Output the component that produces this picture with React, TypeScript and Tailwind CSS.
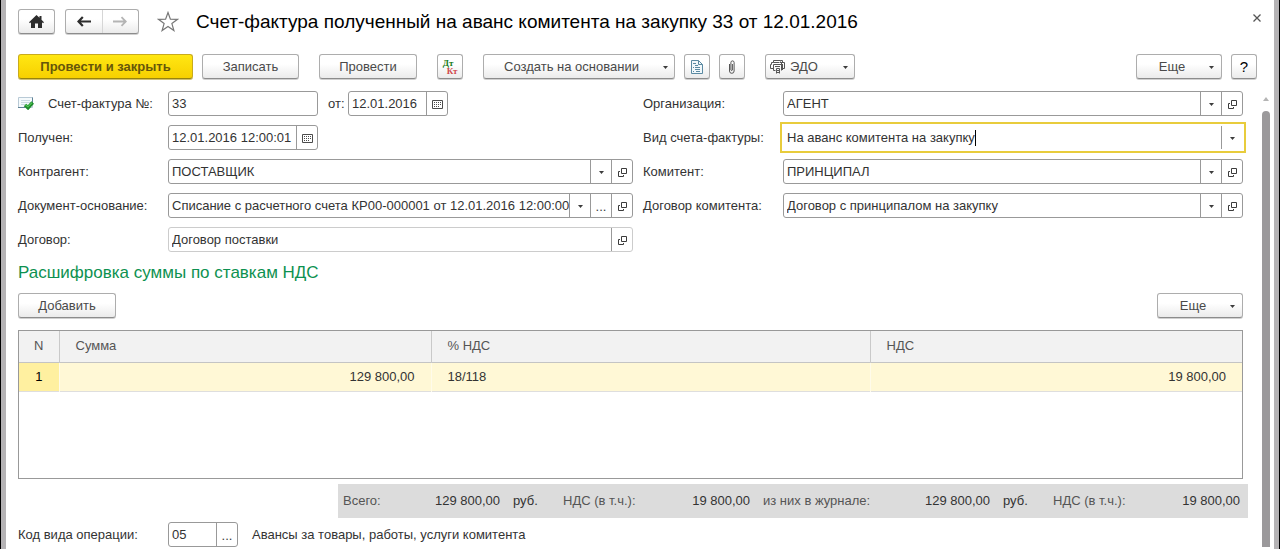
import type { ReactNode } from "react";
import { clsx } from "clsx";

const buttonStyle =
  "flex h-[25px] shrink-0 items-center justify-center rounded-[3px] border border-[#adadad] border-b-[#8c8c8c] bg-linear-to-b from-white from-40% to-[#ebebeb] text-[#4a4a4a] shadow-[0_1px_0_#d0d0d0]";

const cellStyle =
  "flex w-[21px] shrink-0 items-center justify-center border-l border-[#999999] pt-[2px] text-[#3c3c3c]";

function Caret() {
  return (
    <svg className="h-[3px] w-[5px]" viewBox="0 0 5 3" aria-hidden="true">
      <path d="M0 0h5L2.5 3z" fill="#3c3c3c" />
    </svg>
  );
}

function CalendarIcon() {
  return (
    <svg className="h-[9px] w-[11px]" viewBox="0 0 11 9" aria-hidden="true">
      <path d="M.5.5h10v8H.5z" fill="none" stroke="#4c4c4c" />
      <path d="M2 2.500h7M2 4.500h7M2 6.500h5" stroke="#4c4c4c" strokeDasharray="1 1" />
    </svg>
  );
}

function OpenIcon() {
  return (
    <svg className="h-[9px] w-[9px]" viewBox="0 0 9 9" aria-hidden="true">
      <path d="M3.500.5h5v5h-5zM2 3.500H.5v5h5V7" fill="none" stroke="#3c3c3c" />
    </svg>
  );
}

function HomeIcon() {
  return (
    <svg className="h-[13px] w-[15px]" viewBox="0 0 15 13" aria-hidden="true">
      <path d="M7.500 0 10.500 2.800V1h2v3.700L15 7.200l-1 1-1-.9V13H9V8.500H6V13H2V7.300l-1 .9-1-1z" fill="#2d2d2d" />
    </svg>
  );
}

function ArrowIcon({ forward = false }: { forward?: boolean }) {
  return (
    <svg className="h-[11px] w-[14px]" viewBox="0 0 14 11" aria-hidden="true">
      {forward ? (
        <path d="M0 5.500h13M8.500 1.200l4.300 4.300-4.300 4.300" fill="none" stroke="#b4b4b4" strokeWidth="1.800" />
      ) : (
        <path d="M14 5.500H1.500M5.800 1 1.500 5.500 5.800 10" fill="none" stroke="#2d2d2d" strokeWidth="2.200" />
      )}
    </svg>
  );
}

function StarIcon() {
  return (
    <svg className="h-[21px] w-[22px]" viewBox="0 0 22 21" aria-hidden="true">
      <path
        d="M11 1.500l2.400 6.600 7.100.2-5.600 4.300 2 6.900L11 15.500l-5.900 4 2-6.900L1.500 8.300l7.100-.2z"
        fill="#fff"
        stroke="#777"
        strokeWidth="1.200"
      />
    </svg>
  );
}

function PostedIcon() {
  return (
    <svg className="h-[13px] w-[16px]" viewBox="0 0 16 13" aria-hidden="true">
      <path d="M.5.5h14v10H.5z" fill="#f5fafc" stroke="#b9cad6" />
      <path d="M0 10.500h7M14.500.5v6" stroke="#5f8296" />
      <path d="M3 3.500h9M3 5.500h9M3 7.500h4" stroke="#cbdae2" />
      <path d="M7 8l3 2.700L14.700 5.500" fill="none" stroke="#1e8a2a" strokeWidth="3.600" />
      <path d="M7.500 7.800l2.500 2 4-4.100" fill="none" stroke="#52c957" strokeWidth="1.200" />
    </svg>
  );
}

function DocumentIcon() {
  return (
    <svg className="h-[14px] w-[12px]" viewBox="0 0 12 14" aria-hidden="true">
      <path d="M.5.5h7l4 4v9H.5z" fill="#f1f8fb" stroke="#5b8aa2" />
      <path d="M7.500.5v4h4" fill="none" stroke="#5b8aa2" />
      <path d="M2 3.500h3M4 5.500h3M2 7.500h1M4 7.500h5M4 9.500h5M2 11.500h1M5 11.500h4" stroke="#5b8aa2" />
    </svg>
  );
}

function ClipIcon() {
  return (
    <svg className="h-[14px] w-[8px]" viewBox="0 0 8 14" aria-hidden="true">
      <path
        d="M1.500 4v7a2.300 2.300 0 0 0 4.600 0V2.500a1.600 1.600 0 0 0-3.200 0V10a.8.8 0 0 0 1.500 0V4"
        fill="none"
        stroke="#555"
      />
    </svg>
  );
}

function ExchangeIcon() {
  return (
    <svg className="h-[15px] w-[15px]" viewBox="0 0 15 15" aria-hidden="true">
      <path d="M3.500 3.500v-2h7v1M10.500 1.500h2v2M10 3.500h4.500v6h-2" fill="none" stroke="#555" />
      <path d="M3.500 3.500H1.500v2h-1v4h3M3.500 3.500h6M3.500 5.500v6h2M3.500 5.500h8M11.500 4v7.500M12.500 5v6" fill="none" stroke="#555" />
      <path d="M5 7.500h5" stroke="#555" />
      <path d="M6.500 9.500h3v2h-3zM6.500 11.500v3M9.500 11.500v3M7 13.500h2" fill="none" stroke="#555" />
    </svg>
  );
}

type FieldProps = {
  id: string;
  value: string;
  kind?: "text" | "select";
  className?: string;
  cells?: ("calendar" | "open" | "more")[];
  muted?: boolean;
};

const cellNames = { calendar: "Выбрать дату", open: "Открыть", more: "Выбрать" };

function Field({ id, value, kind = "text", className, cells = [], muted }: FieldProps) {
  return (
    <div
      className={clsx(
        "flex h-[25px] overflow-hidden rounded-[3px] border bg-white",
        muted ? "border-[#cccccc]" : "border-[#999999]",
        className,
      )}
    >
      {kind === "select" ? (
        <div className="grid min-w-0 flex-1 grid-cols-[1fr_21px]">
          <select
            id={id}
            className="col-span-2 col-start-1 row-start-1 min-w-0 appearance-none pr-[21px] pl-[3px] outline-none"
          >
            <option>{value}</option>
          </select>
          <span className={clsx(cellStyle, "pointer-events-none col-start-2 row-start-1")}>
            <Caret />
          </span>
        </div>
      ) : (
        <input id={id} defaultValue={value} className="min-w-0 flex-1 pl-[3px] outline-none" />
      )}
      {cells.map((cell) => (
        <button key={cell} type="button" aria-label={cellNames[cell]} className={cellStyle}>
          {cell === "calendar" && <CalendarIcon />}
          {cell === "open" && <OpenIcon />}
          {cell === "more" && "..."}
        </button>
      ))}
    </div>
  );
}

function Row({ id, label, icon, children }: { id: string; label: string; icon?: ReactNode; children: ReactNode }) {
  return (
    <div className="flex h-[25px] items-center">
      <label htmlFor={id} className="flex w-[150px] shrink-0 items-center gap-[14px] whitespace-nowrap">
        {icon}
        {label}
      </label>
      {children}
    </div>
  );
}

function RightRow({ id, label, children }: { id: string; label: string; children: ReactNode }) {
  return (
    <div className="flex h-[25px] items-center">
      <label htmlFor={id} className="w-[140px] shrink-0 whitespace-nowrap">
        {label}
      </label>
      {children}
    </div>
  );
}

function MoreButton() {
  return (
    <button type="button" className={clsx(buttonStyle, "w-[86px] gap-6 pl-[15px]")}>
      Еще
      <span className="pt-[2px]">
        <Caret />
      </span>
    </button>
  );
}

function Total({ label, value, className }: { label: string; value: string; className: string }) {
  return (
    <div className={clsx("flex shrink-0 justify-between", className)}>
      <span className="text-[#555555]">{label}</span>
      <span>{value}</span>
    </div>
  );
}

export default function App() {
  return (
    <div className="flex min-h-screen border-r border-l border-black bg-white font-['Liberation_Sans',Arial,sans-serif] text-[13px] leading-4 text-[#333333]">
      <div className="w-[5px] shrink-0 bg-[#b5b3b5]" />

      <main className="min-w-0 flex-1 pt-[9px] pl-3">
        {/* Title bar */}
        <header className="flex h-[25px] items-center pr-[13px]">
          <button type="button" aria-label="Начальная страница" className={clsx(buttonStyle, "w-[37px]")}>
            <HomeIcon />
          </button>
          <div className={clsx(buttonStyle, "ml-[10px] w-[74px]")}>
            <button type="button" aria-label="Назад" className="flex h-full flex-1 items-center justify-center">
              <ArrowIcon />
            </button>
            <button
              type="button"
              aria-label="Вперед"
              className="flex h-full flex-1 items-center justify-center border-l border-[#d6d6d6]"
            >
              <ArrowIcon forward />
            </button>
          </div>
          <button type="button" aria-label="В избранное" className="ml-[18px]">
            <StarIcon />
          </button>
          <h1 className="ml-[17px] text-[19px] leading-6 whitespace-nowrap text-black">
            Счет-фактура полученный на аванс комитента на закупку 33 от 12.01.2016
          </h1>
          <button type="button" aria-label="Закрыть" className="mb-2 ml-auto">
            <svg className="h-2 w-2" viewBox="0 0 8 8" aria-hidden="true">
              <path d="M.5.5l7 7M7.500.5l-7 7" stroke="#555" strokeWidth="1.300" />
            </svg>
          </button>
        </header>

        {/* Commands */}
        <div className="mt-5 flex pr-[17px]">
          <button
            type="button"
            className="h-[25px] w-[175px] rounded-[3px] border border-[#c9ab1c] border-b-[#97830f] bg-linear-to-b from-[#ffe712] to-[#f7d000] font-bold text-[#66560a] shadow-[0_1px_0_#d0c070]"
          >
            Провести и закрыть
          </button>
          <button type="button" className={clsx(buttonStyle, "ml-[9px] w-[97px]")}>
            Записать
          </button>
          <button type="button" className={clsx(buttonStyle, "ml-5 w-[98px]")}>
            Провести
          </button>
          <button
            type="button"
            className={clsx(
              buttonStyle,
              "ml-5 w-[26px] flex-col font-['Liberation_Serif',serif] text-[9px] leading-2 font-bold",
            )}
          >
            <span className="pr-1 text-[#187a18]">Дт</span>
            <span className="pl-1 text-[#d0484c]">Кт</span>
          </button>
          <button type="button" className={clsx(buttonStyle, "ml-5 w-[192px] gap-6 pl-[14px]")}>
            Создать на основании
            <span className="pt-[2px]">
              <Caret />
            </span>
          </button>
          <button type="button" aria-label="Отчет" className={clsx(buttonStyle, "ml-[9px] w-[26px]")}>
            <DocumentIcon />
          </button>
          <button type="button" aria-label="Файлы" className={clsx(buttonStyle, "ml-[9px] w-[26px]")}>
            <ClipIcon />
          </button>
          <button type="button" className={clsx(buttonStyle, "ml-5 w-[90px] pr-[6px] pl-1")}>
            <ExchangeIcon />
            <span className="mr-auto ml-[5px]">ЭДО</span>
            <span className="pt-[2px]">
              <Caret />
            </span>
          </button>
          <div className="ml-auto flex gap-[9px]">
            <MoreButton />
            <button type="button" aria-label="Справка" className={clsx(buttonStyle, "w-[26px] text-[15px] text-black")}>
              ?
            </button>
          </div>
        </div>

        <div className="mt-3 flex pr-1">
          <div className="min-w-0 flex-1">
            {/* Document fields */}
            <div className="grid grid-cols-[615px_1fr] gap-[10px]">
              <div className="flex flex-col gap-[9px]">
                <Row id="number" label="Счет-фактура №:" icon={<PostedIcon />}>
                  <Field id="number" value="33" className="w-[150px]" />
                  <label htmlFor="date" className="w-[30px] pl-[10px]">
                    от:
                  </label>
                  <Field id="date" value="12.01.2016" className="w-[100px]" cells={["calendar"]} />
                </Row>
                <Row id="received" label="Получен:">
                  <Field id="received" value="12.01.2016 12:00:01" className="w-[150px]" cells={["calendar"]} />
                </Row>
                <Row id="contractor" label="Контрагент:">
                  <Field id="contractor" value="ПОСТАВЩИК" kind="select" className="flex-1" cells={["open"]} />
                </Row>
                <Row id="basis" label="Документ-основание:">
                  <Field
                    id="basis"
                    value="Списание с расчетного счета КР00-000001 от 12.01.2016 12:00:00"
                    kind="select"
                    className="flex-1"
                    cells={["more", "open"]}
                  />
                </Row>
                <Row id="contract" label="Договор:">
                  <Field id="contract" value="Договор поставки" className="flex-1" cells={["open"]} muted />
                </Row>
              </div>

              <div className="flex flex-col gap-[9px]">
                <RightRow id="organization" label="Организация:">
                  <Field id="organization" value="АГЕНТ" kind="select" className="flex-1" cells={["open"]} />
                </RightRow>
                <RightRow id="invoice-kind" label="Вид счета-фактуры:">
                  {/* Focused field, with the text cursor after the value */}
                  <div className="flex h-[25px] flex-1 border border-white outline-2 outline-offset-1 outline-[#e8cc3c]">
                    <div className="flex min-w-0 flex-1 items-center">
                      <input
                        id="invoice-kind"
                        role="combobox"
                        aria-expanded="false"
                        defaultValue="На аванс комитента на закупку"
                        className="field-sizing-content pl-[3px] outline-none"
                      />
                      <span className="h-4 w-px bg-black" />
                    </div>
                    <button type="button" aria-label="Показать список" className={cellStyle}>
                      <Caret />
                    </button>
                  </div>
                </RightRow>
                <RightRow id="principal" label="Комитент:">
                  <Field id="principal" value="ПРИНЦИПАЛ" kind="select" className="flex-1" cells={["open"]} />
                </RightRow>
                <RightRow id="principal-contract" label="Договор комитента:">
                  <Field
                    id="principal-contract"
                    value="Договор с принципалом на закупку"
                    kind="select"
                    className="flex-1"
                    cells={["open"]}
                  />
                </RightRow>
              </div>
            </div>

            {/* VAT breakdown */}
            <h2 className="mt-[9px] text-[17px] leading-6 text-[#0d9150]">Расшифровка суммы по ставкам НДС</h2>
            <div className="mt-2 flex justify-between">
              <button type="button" className={clsx(buttonStyle, "w-[98px]")}>
                Добавить
              </button>
              <MoreButton />
            </div>

            <div className="mt-3 min-h-[149px] border border-[#999999]">
              <table className="w-full table-fixed border-collapse">
                <colgroup>
                  <col className="w-[40px]" />
                  <col className="w-[372px]" />
                  <col className="w-[439px]" />
                  <col />
                </colgroup>
                <thead>
                  <tr className="h-[31px] border-b border-[#c4c4c4] bg-[#f2f2f2] text-left text-[#555555]">
                    <th className="border-r border-[#c9c9c9] text-center font-normal">N</th>
                    <th className="border-r border-[#c9c9c9] px-4 font-normal">Сумма</th>
                    <th className="border-r border-[#c9c9c9] px-4 font-normal">% НДС</th>
                    <th className="px-4 font-normal">НДС</th>
                  </tr>
                </thead>
                <tbody>
                  <tr className="h-[29px] border-b border-[#dedede] bg-[#fff8d6]">
                    <td className="border-r border-[#fffbea] bg-[#fff0a0] text-center text-black">1</td>
                    <td className="border-r border-[#fffbea] px-4 text-right">129 800,00</td>
                    <td className="border-r border-[#fffbea] px-4">18/118</td>
                    <td className="px-4 text-right">19 800,00</td>
                  </tr>
                </tbody>
              </table>
            </div>

            {/* Totals */}
            <div className="mt-[5px] -mr-[5px] flex justify-end">
              <div className="flex h-[34px] items-center bg-[#dcdcdc] pr-2 pl-[5px]">
                <Total label="Всего:" value="129 800,00" className="w-[157px]" />
                <span className="w-[63px] pl-[13px]">руб.</span>
                <Total label="НДС (в т.ч.):" value="19 800,00" className="mr-[13px] w-[187px]" />
                <Total label="из них в журнале:" value="129 800,00" className="w-[227px]" />
                <span className="w-[63px] pl-[13px]">руб.</span>
                <Total label="НДС (в т.ч.):" value="19 800,00" className="w-[187px]" />
              </div>
            </div>

            <div className="mt-1">
              <Row id="operation" label="Код вида операции:">
                <Field id="operation" value="05" className="w-[70px]" cells={["more"]} />
                <span className="ml-[14px]">Авансы за товары, работы, услуги комитента</span>
              </Row>
            </div>
          </div>

          {/* Scroll bar */}
          <div className="mt-[6px] ml-[19px] flex w-2 shrink-0 flex-col items-center">
            <svg className="h-1 w-[6px]" viewBox="0 0 6 4" aria-hidden="true">
              <path d="M3 0l3 4H0z" fill="#b5b5b5" />
            </svg>
            <div className="mt-[10px] w-2 flex-1 rounded-t-[4px] bg-[#9b999b]" />
          </div>
        </div>
      </main>

      <div className="w-[5px] shrink-0 bg-[#b5b3b5]" />
    </div>
  );
}
